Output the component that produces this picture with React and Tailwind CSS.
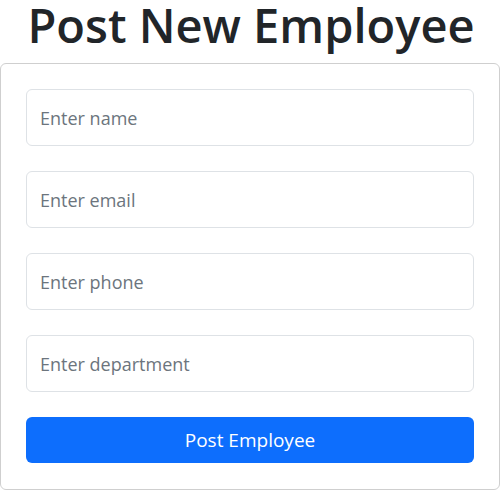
export default function App() {
  const fields = ["Enter name", "Enter email", "Enter phone", "Enter department"];

  return (
    <div className="w-[502px] font-['Open_Sans',sans-serif] text-[#212529]">
      <h1 className="h-[63px] text-center text-[47px] leading-[50px] font-semibold">Post New Employee</h1>
      <div className="w-[500px] h-[427px] border border-[#cfcfcf] rounded-md bg-white px-[25px] pt-[25px]">
        <form className="flex flex-col gap-[25px]" onSubmit={(e) => e.preventDefault()}>
          {fields.map((f) => (
            <input
              key={f}
              type="text"
              placeholder={f}
              className="h-[57px] w-full rounded-md border border-[#dee2e6] px-[13px] text-[18px] placeholder:text-[#6c757d] outline-none"
            />
          ))}
          <button
            type="submit"
            className="h-[46px] w-full rounded-md bg-[#0d6efd] text-[19px] text-white"
          >
            Post Employee
          </button>
        </form>
      </div>
    </div>
  );
}
